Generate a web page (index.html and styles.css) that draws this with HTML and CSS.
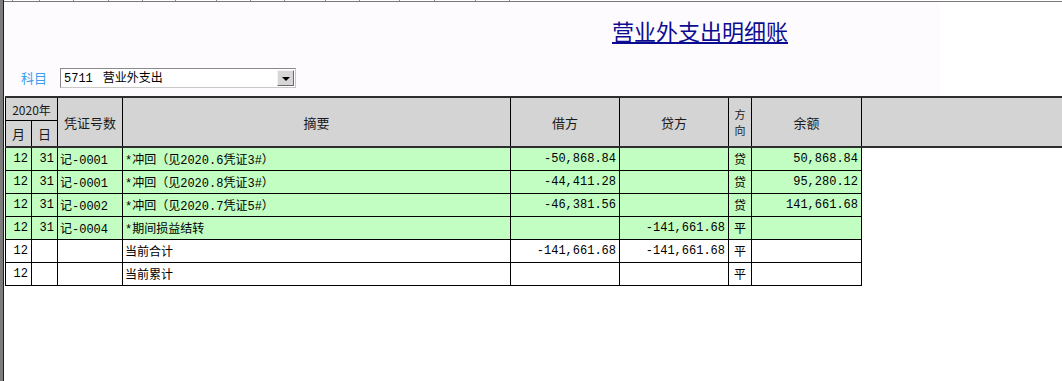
FILE: index.html
```html
<!DOCTYPE html>
<html lang="zh-CN">
<head>
<meta charset="utf-8">
<title>营业外支出明细账</title>
<link rel="stylesheet" href="styles.css">
</head>
<body>
<div class="frame">
  <div class="inner">
    <div class="ruler">
      <span class="i9"></span><span class="i27"></span><span class="i34"></span><span class="i35"></span><span class="i34"></span><span class="i33"></span><span class="i41"></span><span class="i34"></span><span class="i34"></span><span class="i41"></span><span class="i34"></span><span class="i40"></span><span class="i35"></span><span class="i41"></span><span class="i34"></span>
    </div>
    <div class="top-panel">
      <div class="title-row"><a class="title" href="#">营业外支出明细账</a></div>
      <div class="subject-row">
        <span class="label">科目</span>
        <div class="select">
          <span class="select-text"><span class="code">5711</span>营业外支出</span>
          <span class="drop"><span class="tri"></span></span>
        </div>
      </div>
    </div>
    <table class="ledger">
      <colgroup>
        <col class="c-m"><col class="c-d"><col class="c-no"><col class="c-sum"><col class="c-dr"><col class="c-cr"><col class="c-dir"><col class="c-bal"><col class="c-fill">
      </colgroup>
      <thead>
        <tr>
          <th colspan="2" class="yr">2020年</th>
          <th rowspan="2" class="rs">凭证号数</th>
          <th rowspan="2" class="rs">摘要</th>
          <th rowspan="2" class="rs">借方</th>
          <th rowspan="2" class="rs">贷方</th>
          <th rowspan="2" class="rs dirh"><span class="stack">方</span><span class="stack">向</span></th>
          <th rowspan="2" class="rs">余额</th>
          <th rowspan="2" class="rs fill"></th>
        </tr>
        <tr>
          <th class="md">月</th>
          <th class="md">日</th>
        </tr>
      </thead>
      <tbody>
        <tr class="green">
          <td class="num">12</td><td class="num">31</td><td class="txt">记-0001</td><td class="txt">*冲回（见2020.6凭证3#）</td><td class="num">-50,868.84</td><td class="num"></td><td class="dir">贷</td><td class="num">50,868.84</td><td class="fill"></td>
        </tr>
        <tr class="green">
          <td class="num">12</td><td class="num">31</td><td class="txt">记-0001</td><td class="txt">*冲回（见2020.8凭证3#）</td><td class="num">-44,411.28</td><td class="num"></td><td class="dir">贷</td><td class="num">95,280.12</td><td class="fill"></td>
        </tr>
        <tr class="green">
          <td class="num">12</td><td class="num">31</td><td class="txt">记-0002</td><td class="txt">*冲回（见2020.7凭证5#）</td><td class="num">-46,381.56</td><td class="num"></td><td class="dir">贷</td><td class="num">141,661.68</td><td class="fill"></td>
        </tr>
        <tr class="green">
          <td class="num">12</td><td class="num">31</td><td class="txt">记-0004</td><td class="txt">*期间损益结转</td><td class="num"></td><td class="num">-141,661.68</td><td class="dir">平</td><td class="num"></td><td class="fill"></td>
        </tr>
        <tr>
          <td class="num">12</td><td class="num"></td><td class="txt"></td><td class="txt">当前合计</td><td class="num">-141,661.68</td><td class="num">-141,661.68</td><td class="dir">平</td><td class="num"></td><td class="fill"></td>
        </tr>
        <tr>
          <td class="num">12</td><td class="num"></td><td class="txt"></td><td class="txt">当前累计</td><td class="num"></td><td class="num"></td><td class="dir">平</td><td class="num"></td><td class="fill"></td>
        </tr>
      </tbody>
    </table>
  </div>
</div>
</body>
</html>
```

FILE: styles.css
```css
html, body {
  margin: 0;
  padding: 0;
  background: #ffffff;
}

body {
  width: 1062px;
  height: 381px;
  overflow: hidden;
  font-family: "Noto Sans CJK SC", sans-serif;
}

.frame {
  height: 381px;
  border-left: 3px solid #7c7c7c;
}

.inner {
  height: 381px;
  border-left: 1px solid #1e1e1e;
}

/* ruler strip at the very top */
.ruler {
  display: flex;
  height: 1px;
  border-bottom: 1px solid #7a7a7a;
  background: #ffffff;
}
.ruler span {
  flex: none;
  height: 1px;
  border-right: 1px solid #8a8a8a;
}
.ruler .i9 { width: 8px; }
.ruler .i27 { width: 26px; }
.ruler .i33 { width: 32px; }
.ruler .i34 { width: 33px; }
.ruler .i35 { width: 34px; }
.ruler .i40 { width: 39px; }
.ruler .i41 { width: 40px; }

/* upper panel */
.top-panel {
  width: 936px;
  height: 94px;
  background: #fefbff;
  display: flex;
  flex-direction: column;
}

.title-row {
  margin-top: 15px;
  padding-left: 608px;
  height: 26px;
  line-height: 26px;
}

.title {
  font-family: "Noto Sans CJK SC", sans-serif;
  font-size: 22px;
  color: #0c0c90;
  text-decoration: underline;
  text-underline-offset: 2px;
  white-space: nowrap;
}

.subject-row {
  margin-top: 25px;
  display: flex;
  align-items: center;
  height: 20px;
}

.label {
  margin-left: 17px;
  font-size: 13px;
  line-height: 20px;
  color: #3d9bf0;
  width: 26px;
}

.select {
  margin-left: 13px;
  width: 236px;
  height: 20px;
  box-sizing: border-box;
  border-top: 1px solid #8a8a8a;
  border-left: 1px solid #8a8a8a;
  border-right: 1px solid #c8c8c8;
  border-bottom: 1px solid #c8c8c8;
  background: #ffffff;
  display: flex;
  align-items: center;
  justify-content: space-between;
}

.select-text {
  padding-left: 3px;
  font-size: 12px;
  line-height: 18px;
  color: #000000;
  white-space: nowrap;
}

.select-text .code {
  font-family: "Liberation Mono", monospace;
  margin-right: 10px;
}

.drop {
  width: 17px;
  height: 16px;
  margin-right: 1px;
  box-sizing: border-box;
  background: #d6d6d6;
  border-top: 1px solid #f4f4f4;
  border-left: 1px solid #f4f4f4;
  border-right: 1px solid #6a6a6a;
  border-bottom: 1px solid #6a6a6a;
  display: flex;
  align-items: center;
  justify-content: center;
}

.tri {
  width: 0;
  height: 0;
  border-left: 4px solid transparent;
  border-right: 4px solid transparent;
  border-top: 4px solid #000000;
  margin-top: 1px;
}

/* ledger table */
.ledger {
  margin-left: 1px;
  border-collapse: collapse;
  table-layout: fixed;
  width: 1058px;
  font-family: "Liberation Mono", "Noto Sans CJK SC", monospace;
  font-size: 12px;
  color: #000000;
}

.c-m { width: 26px; }
.c-d { width: 26px; }
.c-no { width: 65px; }
.c-sum { width: 388px; }
.c-dr { width: 109px; }
.c-cr { width: 109px; }
.c-dir { width: 23px; }
.c-bal { width: 110px; }
.c-fill { width: 202px; }

.ledger th {
  background: #d4d4d4;
  border: 1px solid #000000;
  font-family: "Noto Sans CJK SC", sans-serif;
  font-size: 13px;
  font-weight: normal;
  color: #1a1a1a;
  padding: 0;
  text-align: center;
  vertical-align: middle;
}

.ledger thead tr:first-child th {
  border-top: 2px solid #2e2e2e;
}

.ledger th.rs,
.ledger th.md {
  border-bottom: 2px solid #2e2e2e;
}

.ledger th.yr {
  height: 22px;
  font-size: 12px;
}

.ledger th.md {
  height: 25px;
}

.ledger th.dirh .stack {
  display: block;
  font-size: 11px;
  line-height: 16px;
  height: 16px;
}

.ledger th.fill {
  border-right: none;
}

.ledger td {
  height: 22px;
  padding: 0 3px;
  border: 1px solid #000000;
  white-space: nowrap;
  overflow: hidden;
  vertical-align: middle;
}

.ledger td.num {
  text-align: right;
}

.ledger td.txt {
  text-align: left;
  padding-left: 2px;
}

.ledger td.dir {
  text-align: center;
  padding: 0;
}

.ledger tr.green td {
  background: #c2fdc2;
}

.ledger tr td.fill {
  background: #ffffff;
  border: none;
  border-left: 1px solid #000000;
}
```
